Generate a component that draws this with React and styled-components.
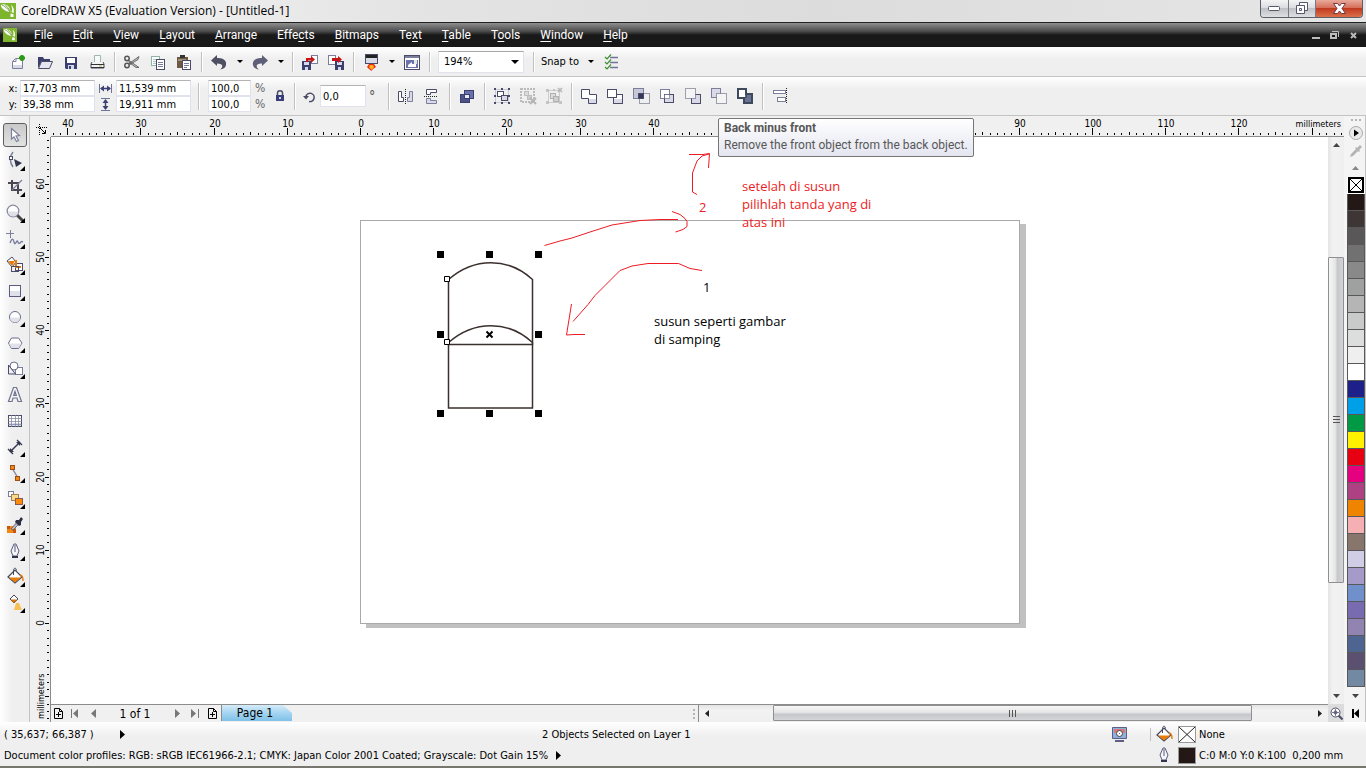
import React from 'react';
import styled, { createGlobalStyle, css } from 'styled-components';

const GlobalStyle = createGlobalStyle`
  * { box-sizing: border-box; }

  body {
    margin: 0;
    background: #f0f0f0;
    color: #000;
    font-family: 'DejaVu Sans Condensed', 'DejaVu Sans', sans-serif;
    font-size: 11px;
  }

  button, input, select {
    font: inherit;
    color: inherit;
    margin: 0;
    padding: 0;
    border: 0;
    background: none;
  }

  svg { display: block; flex: none; }
`;

/* COLOURS SHARED BY THE ICONS */
const INK = '#4a4b66';
const EDGE = '#7c7f9b';
const PALE = '#d9d9e8';
const NAVY = '#3b3f6e';

const uiFont = css`
  font-family: 'Open Sans', 'Noto Sans', sans-serif;
`;

const narrowFont = css`
  font-family: Roboto, 'Open Sans', sans-serif;
`;

/* WINDOW FRAME */
const Window = styled.div`
  display: flex;
  flex-direction: column;
  min-height: 100vh;
  border-bottom: 2px solid #77776f;
`;

const TitleBar = styled.header`
  ${uiFont}
  display: flex;
  align-items: center;
  height: 23px;
  background: linear-gradient(90deg, #f6f6f6, #e4e4e4 30%, #dcdcdc 60%, #e6e6e6);
  border-bottom: 1px solid #222;
`;

const Title = styled.h1`
  flex: 1;
  margin: 0 0 0 5px;
  font-size: 12px;
  line-height: 20px;
  font-weight: 400;
`;

const Controls = styled.div`
  display: flex;
  align-self: flex-start;
  margin-right: 3px;
  border: 1px solid #5d5f66;
  border-top: 0;
  border-radius: 0 0 4px 4px;
  overflow: hidden;
`;

const ControlButton = styled.button`
  display: grid;
  place-items: center;
  width: ${props => (props.$close ? 47 : 27)}px;
  height: 17px;
  background: ${props =>
    props.$close
      ? 'linear-gradient(#e9a99b 0, #d6705c 45%, #c03a20 50%, #dc7048 100%)'
      : 'linear-gradient(#f4f4f5 0, #dcdde0 45%, #c0c1c6 50%, #dedfe2 100%)'};

  & + & { border-left: 1px solid #777983; }
`;

/* MENU */
const MenuBar = styled.nav`
  ${narrowFont}
  display: flex;
  align-items: center;
  height: 24px;
  padding: 0 8px 0 3px;
  color: #fff;
  background: linear-gradient(#8f8f8f 0, #4a4a4a 35%, #191919 50%, #181818 100%);
`;

const MenuList = styled.div`
  display: flex;
  flex: 1;
  margin-left: 7px;
`;

const MenuItem = styled.button`
  padding: 0 10px;
  font-size: 12px;
  line-height: 22px;

  u { text-underline-offset: 2px; }
`;

const DocControls = styled.div`
  display: flex;
  gap: 10px;
`;

const DocButton = styled.button`
  width: 9px;
  height: 22px;
  display: grid;
  place-items: center;
`;

/* TOOLBARS */
const Bar = styled.div`
  display: flex;
  align-items: center;
  height: ${props => (props.$tall ? 39 : 30)}px;
  padding-left: 6px;
  border-bottom: 1px solid #c3c3c3;
  background: linear-gradient(#fff 0, #efefef 12px);
`;

const Divider = styled.span`
  width: 2px;
  height: ${props => (props.$tall ? 27 : 20)}px;
  margin: 0 3px 0 4px;
  border-left: 1px solid #c0c0c0;
  border-right: 1px solid #fff;
`;

const IconButton = styled.button`
  position: relative;
  display: grid;
  place-items: center;
  width: 26px;
  height: 26px;
`;

const CaretButton = styled.button`
  display: grid;
  place-items: center;
  width: 15px;
  height: 26px;
`;

const Zoom = styled.div`
  display: grid;
  align-items: center;
  width: 86px;
  height: 22px;
  margin: 0 5px 0 4px;
  background: #fff;
  border: 1px solid #e0e3ee;
  border-top-color: #a8a8a8;

  > * { grid-area: 1 / 1; }
  svg { justify-self: end; margin-right: 4px; pointer-events: none; }
`;

const ZoomSelect = styled.select`
  appearance: none;
  width: 100%;
  height: 20px;
  padding-left: 5px;
  outline: none;
`;

const SnapButton = styled.button`
  display: flex;
  align-items: center;
  gap: 9px;
  margin: 0 4px 0 3px;
  height: 26px;
`;

const FieldGrid = styled.div`
  display: grid;
  grid-template-columns: ${props => props.$cols};
  grid-auto-rows: ${props => (props.$single ? 22 : 16)}px;
  align-items: center;
  margin-right: ${props => props.$gap || 0}px;
`;

const FieldLabel = styled.label`
  display: grid;
  place-items: center;
`;

const Field = styled.input`
  width: ${props => props.$width}px;
  height: ${props => (props.$single ? 22 : 16)}px;
  padding: 0 0 0 2px;
  background: #fff;
  border: 1px solid #e0e3ee;
  border-top-color: ${props => (props.$plain ? '#e0e3ee' : '#b4b4b4')};
  outline: none;
`;

const ScaleField = styled(Field)`
  margin-left: 5px;
`;

const Unit = styled.span`
  padding-left: 5px;
  font-size: 12px;
  color: #666;
`;

const Degree = styled.span`
  width: 18px;
  padding-left: 3px;
  font-size: 14px;
  color: #555;
`;

const LockButton = styled(IconButton)`
  margin: 0 -3px 0 -1px;
`;

const TooltipBox = styled.span`
  ${narrowFont}
  position: absolute;
  z-index: 5;
  left: 12px;
  top: 35px;
  min-width: 256px;
  padding: 1px 4px 2px 5px;
  font-size: 12px;
  line-height: 17px;
  text-align: left;
  white-space: nowrap;
  color: #575757;
  background: linear-gradient(#fff, #e4e5f0);
  border: 1px solid #767676;
  border-radius: 2px;

  strong { display: block; }
`;

/* WORK AREA */
const Workspace = styled.main`
  flex: 1;
  display: grid;
  grid-template-columns: 30px 21px 1fr 16px 22px;
  grid-template-rows: 21px 1fr 18px;
`;

const Toolbox = styled.aside`
  grid-row: 1 / -1;
  display: flex;
  flex-direction: column;
  align-items: center;
  padding-top: 6px;
  border-right: 1px solid #c3c3c3;
  background: linear-gradient(90deg, #fff 0, #efefef 12px);
`;

const ToolButton = styled.button`
  display: grid;
  place-items: center;
  width: 24px;
  height: 24px;
  margin: 1px 0;
  border-radius: 3px;
  ${props =>
    props.$active &&
    css`
      border: 1px solid #5f5f5f;
      background: linear-gradient(#c9c9c9, #e2e2e2);
    `}
`;

const RulerCorner = styled.div`
  display: grid;
  place-items: end;
  padding: 0 4px 2px 0;
`;

const TopRuler = styled.div`
  grid-column: 3 / 5;
  border-bottom: 1px solid #8c8c8c;
  overflow: hidden;
`;

const SideRuler = styled.div`
  grid-column: 2;
  grid-row: 2 / 4;
  border-right: 1px solid #8c8c8c;
  overflow: hidden;
`;

const RulerSvg = styled.svg`
  font-size: 10px;
  shape-rendering: crispEdges;

  .unit { font-size: 9px; }
`;

const Canvas = styled.section`
  grid-column: 3;
  grid-row: 2;
  position: relative;
  overflow: hidden;
  background: #fff;
`;

const Page = styled.div`
  position: absolute;
  left: 309px;
  top: 83px;
  width: 660px;
  height: 404px;
  border: 1px solid #a9a9a9;
  box-shadow: 6px 4px 0 #c0c0c0;
`;

const Drawing = styled.svg`
  position: absolute;
  inset: 0;
  width: 100%;
  height: 100%;
`;

const Note = styled.p`
  ${uiFont}
  position: absolute;
  left: ${props => props.$x}px;
  top: ${props => props.$y}px;
  margin: 0;
  font-size: 13px;
  line-height: 18px;
  white-space: pre;
  color: ${props => (props.$red ? '#ed1c24' : '#000')};
`;

/* SCROLL BARS */
const VScroll = styled.div`
  grid-column: 4;
  grid-row: 2;
  display: flex;
  flex-direction: column;
  background: linear-gradient(90deg, #e4e4e4, #f2f2f2 30%, #efefef);
`;

const HScroll = styled.div`
  flex: 629;
  display: flex;
  padding-bottom: 1px;
  background: linear-gradient(#e4e4e4, #f2f2f2 30%, #efefef);
`;

const ScrollArrow = styled.button`
  flex: 0 0 16px;
  display: grid;
  place-items: center;
`;

const ScrollGap = styled.span`
  flex: ${props => props.$part};
`;

const ScrollThumb = styled.button`
  flex: ${props => props.$part};
  display: grid;
  place-items: center;
  border: 1px solid #8f8f8f;
  border-radius: 1px;
  background: linear-gradient(
    ${props => (props.$vertical ? '90deg' : '180deg')},
    #f6f6f6 0, #e6e6e8 45%, #c6c7ca 60%, #d4d5d8 100%
  );
`;

/* PAGE NAVIGATOR */
const BottomRow = styled.div`
  grid-column: 3;
  grid-row: 3;
  display: flex;
  border-top: 1px solid #8c8c8c;
`;

const Navigator = styled.div`
  flex: 642;
  display: flex;
  align-items: center;
  font-size: 12px;
`;

const NavButton = styled.button`
  display: grid;
  place-items: center;
  width: ${props => props.$width || 18}px;
  height: 17px;
`;

const PageCount = styled.span`
  width: 66px;
  text-align: center;
`;

const PageTab = styled.button`
  width: 71px;
  height: 16px;
  padding-right: 4px;
  align-self: flex-start;
  background: linear-gradient(#d5ecfa, #a5d4f0 50%, #7fc1e8);
  border-left: 1px solid #8c8c8c;
  clip-path: polygon(0 0, 62px 0, 100% 8px, 100% 100%, 0 100%);
`;

const Splitter = styled.span`
  flex: 0 0 6px;
  display: grid;
  align-items: center;
  border-right: 1px solid #8c8c8c;
`;

const ZoomCorner = styled.button`
  grid-column: 4;
  grid-row: 3;
  display: grid;
  place-items: center;
  background: #dcdcdc;
`;

/* COLOUR PALETTE */
const Palette = styled.aside`
  grid-column: 5;
  grid-row: 1 / -1;
  display: flex;
  flex-direction: column;
  align-items: center;
  padding-left: 2px;
  border-right: 1px solid #c3c3c3;
  background: #f4f4f4;
`;

const PaletteButton = styled.button`
  display: grid;
  place-items: center;
  width: 18px;
  height: ${props => props.$height}px;
`;

const NoColor = styled.button`
  width: 18px;
  height: 17px;
  display: grid;
  place-items: start center;
  background: #fff;
`;

const Swatches = styled.div`
  width: 18px;
  border: 1px solid #585858;
  border-top: 0;
  background: #585858;
`;

const Swatch = styled.button`
  display: block;
  width: 16px;
  height: 16px;
  margin-bottom: 1px;
  background: ${props => props.$color};

  &:last-child { margin-bottom: 0; }
`;

/* STATUS BAR */
const StatusBar = styled.footer`
  padding: 2px 0 1px 4px;
  background: linear-gradient(#fff 0, #efefef 14px);
`;

const StatusRow = styled.div`
  display: flex;
  align-items: center;
  height: ${props => (props.$last ? 20 : 21)}px;
`;

const Coords = styled.div`
  display: flex;
  align-items: center;
  gap: 26px;
  flex: 0 0 39.5%;
`;

const Profiles = styled.div`
  display: flex;
  align-items: center;
  gap: 8px;
`;

const StatusInfo = styled.div`
  display: flex;
  align-items: center;
  width: ${props => props.$width}px;
  margin-left: auto;
`;

const StatusSwatch = styled.span`
  display: block;
  width: 18px;
  height: 17px;
  margin: 0 3px 0 4px;
  border: 1px solid #999;
  background: ${props => props.$color};
`;

const StatusDivider = styled.span`
  width: 1px;
  height: 13px;
  margin: 0 3px 0 23px;
  background: #c0c0c0;
`;

/* ICONS */
const Icon = ({ size = 18, children }) => (
  <svg width={size} height={size} viewBox={`0 0 ${size} ${size}`} fill="none" aria-hidden="true">
    {children}
  </svg>
);

const Triangle = ({ dir = 'down', color = '#000', w = 7 }) => {
  const h = Math.ceil(w / 2);
  const shapes = {
    down: [w, h, `M0 0H${w}L${w / 2} ${h}Z`],
    up: [w, h, `M0 ${h}H${w}L${w / 2} 0Z`],
    left: [h, w, `M${h} 0V${w}L0 ${w / 2}Z`],
    right: [h, w, `M0 0V${w}L${h} ${w / 2}Z`],
  };
  const [width, height, d] = shapes[dir];
  return (
    <svg width={width} height={height} aria-hidden="true">
      <path d={d} fill={color} />
    </svg>
  );
};

const Balloon = ({ size }) => (
  <svg width={size} height={size} viewBox="0 0 16 16" aria-hidden="true">
    <path fill="#7db52c" d="M0 0h16v16H0z" />
    <path fill="#fff" d="M1 2c2-1.500 5-1 7 1s2 4 3 6c-3 0-6-1-8-3C1.500 4.500.5 3 1 2zM11 2c2.500 1.500 3.500 5 2.500 8l-2-1c1-2 .5-5-.5-7zM10.500 10.500l3 .5v3h-3z" />
    <path fill="none" stroke="#5c8d1c" strokeWidth=".8" d="M2 2c3 1 6 4 8 7M5 1.500c2 2 4 4.500 5.500 7" />
  </svg>
);

const box = (x, y, w, h, fill = '#fff', stroke = INK) => (
  <rect x={x + 0.5} y={y + 0.5} width={w - 1} height={h - 1} fill={fill} stroke={stroke} />
);

const dots = (x, y, w, h, fill = 'none', stroke = INK) => (
  <rect x={x + 0.5} y={y + 0.5} width={w - 1} height={h - 1} fill={fill} stroke={stroke} strokeDasharray="1 1" />
);

const icons = {
  newDoc: (
    <>
      <path d="M5.500 5.500H12.500V15.500H2.500V8.500z" fill="#fff" stroke={EDGE} />
      <path d="M3 8.500h3v-3" stroke={EDGE} />
      <path d="M3 12h9v3H3z" fill={PALE} />
      <path d="M12 2v6M9 5h6M10 3l4 4M14 3l-4 4" stroke="#2c9a14" strokeWidth="2" />
    </>
  ),
  open: (
    <>
      <path d="M2 15V4h5l1 2h6v2H6z" fill={NAVY} />
      <path d="M5.500 8.500h11l-3 7h-11z" fill="#e6e6f0" stroke={INK} />
    </>
  ),
  save: (
    <>
      <path d="M3 4h12v12H4l-1-1z" fill={NAVY} />
      <path d="M5 5h8v5H5z" fill="#fff" />
      <path d="M6 12h6v4H6z" fill="#d5d7ee" />
      <path d="M7 13h2v3H7z" fill={NAVY} />
    </>
  ),
  print: (
    <>
      <path d="M6.500 2.500h6v8h-6z" fill="#f4fbf8" stroke="#9fb5ad" />
      <path d="M4 9l-1 2v4h13v-4l-1-2" fill="#f4f4f4" stroke={INK} />
      <path d="M3 11.500h13M3 14.500h13" stroke="#333" />
      <path d="M11 13h3" stroke="#b9b34e" />
    </>
  ),
  cut: (
    <>
      <path d="M6 10.500L16 3.500l-1 3-8 5zM6 7.500l10 7-3 0-7-5z" fill="#bbb" stroke="#555" strokeWidth=".8" />
      <circle cx="4" cy="5.500" r="2.200" stroke="#555" strokeWidth="1.500" />
      <circle cx="4" cy="12.500" r="2.200" stroke="#555" strokeWidth="1.500" />
    </>
  ),
  copy: (
    <>
      {box(2, 3, 9, 10, '#fff', '#8fb5a9')}
      <path d="M4 6.500h3M4 8.500h3M4 10.500h3" stroke="#a7c6bc" />
      {box(7, 6, 9, 11, '#fff', INK)}
      <path d="M9 9.500h5M9 11.500h5M9 13.500h5" stroke="#777a9c" />
    </>
  ),
  paste: (
    <>
      <path d="M2 4h11v11H2z" fill="#6e5a44" />
      <path d="M5 2h5v3H5z" fill="#333" />
      <path d="M3 6h8v2H3z" fill="#a3917c" />
      {box(7, 7, 9, 10, '#fff', INK)}
      <path d="M9 10.500h5M9 12.500h5M9 14.500h3" stroke="#777a9c" />
    </>
  ),
  undo: <path d="M1 7.500L7 2v3c6-.5 10 2.500 9 7-.5 3-3 4-6 4.500 3-2 4-6-3-6V13z" fill="#4e4f60" />,
  redo: <path d="M17 7.500L11 2v3C5 4.500 1 7.500 2 12c.5 3 3 4 6 4.500-3-2-4-6 3-6V13z" fill="#5d5f78" />,
  importDoc: (
    <>
      {box(10, 2, 7, 9, '#fff', EDGE)}
      <path d="M1 8h9v9H1z" fill={NAVY} />
      <path d="M3 9h5v3H3zM4 14h3v3H4z" fill="#d5d7ee" />
      <path d="M5 9V5h5V3l4 3.500-4 3.500V7.500H7V9" fill="#c81414" />
    </>
  ),
  exportDoc: (
    <>
      {box(1, 2, 8, 10, '#fff', EDGE)}
      <path d="M8 8h9v9H8z" fill={NAVY} />
      <path d="M10 9h5v3h-5zM11 14h3v3h-3z" fill="#d5d7ee" />
      <path d="M5 5h6V3l4 3.500-4 3.500V8H5z" fill="#c81414" />
    </>
  ),
  launcher: (
    <>
      {box(3, 1, 13, 10, PALE, INK)}
      <path d="M4 2h11v3H4z" fill="#222" />
      <path d="M7 11h5l2 3-3 2-1.500 2L7 16l-2-2z" fill="#ee2c0c" />
      <path d="M8 12h3l1 2-2.500 3L7 14z" fill="#ffb020" />
    </>
  ),
  welcome: (
    <>
      {box(1, 2, 16, 15, '#fff', INK)}
      <path d="M2 3h14v2H2z" fill={EDGE} />
      <path d="M3 7h12v8H3z" fill="#6d74ad" />
      <path d="M5 12l4-3v2h4v3H5z" fill="#fff" />
      <path d="M11 7h3v4h-3z" fill="#dfeedd" />
    </>
  ),
  options: (
    <>
      <path d="M8 4.500h8M8 9.500h8M8 14.500h8" stroke="#70739a" strokeWidth="1.500" />
      <path d="M3 4l2 2 4-4.500M3 9l2 2 4-4.500M3 14l2 2 4-4.500" stroke="#3d8f2c" strokeWidth="1.200" />
    </>
  ),
  mirrorH: (
    <>
      <path d="M1.500 4.500h3v6h2v4h-5z" fill="#fff" stroke={INK} />
      <path d="M15.500 4.500h-3v6h-2v4h5z" fill={PALE} stroke={EDGE} />
      <path d="M8.500 2v15" stroke="#222" strokeDasharray="1 1" />
    </>
  ),
  mirrorV: (
    <>
      <path d="M3.500 2.500h10v3h-6v2h-4z" fill="#fff" stroke={INK} />
      <path d="M3.500 16.500h10v-3h-6v-2h-4z" fill={PALE} stroke={EDGE} />
      <path d="M1 9.500h14" stroke="#222" strokeDasharray="1 1" />
    </>
  ),
  order: (
    <>
      {box(6, 3, 10, 9, '#6970ad', NAVY)}
      {box(2, 7, 10, 9, '#4c5288', NAVY)}
      {box(6, 7, 6, 5, '#e4ecf4', NAVY)}
    </>
  ),
  group: (
    <>
      {box(2, 2, 14, 14, 'none', '#c9c9d8')}
      <path d="M1 1h2v2H1zM8 1h2v2H8zM15 1h2v2h-2zM1 8h2v2H1zM15 8h2v2h-2zM1 15h2v2H1zM8 15h2v2H8zM15 15h2v2h-2z" fill={INK} />
      {box(4, 4, 7, 6)}
      {box(8, 8, 7, 6, PALE)}
    </>
  ),
  ungroup: (
    <>
      <rect x="2" y="2" width="13" height="13" stroke="#bbb" strokeWidth="2" strokeDasharray="2 1" />
      {box(5, 4, 5, 5, '#ddd', '#bdbdbd')}
      {box(8, 8, 5, 5, '#ccc', '#bdbdbd')}
      <path d="M11 11l6 6M17 11l-6 6" stroke="#b5b5b5" strokeWidth="2" />
    </>
  ),
  ungroupAll: (
    <>
      {box(3, 3, 12, 13, 'none', '#ccc')}
      <path d="M1 2h3v3H1zM1 14h3v3H1zM14 14h3v3h-3zM8 2h2v2H8z" fill="#c4c4c4" />
      {box(5, 6, 6, 6, '#ddd', '#b0b0b0')}
      {box(8, 9, 6, 6, '#d0d0d0', '#b0b0b0')}
      <path d="M13 1l4 4M17 1l-4 4" stroke="#b5b5b5" strokeWidth="1.500" />
    </>
  ),
  weld: (
    <>
      <path d="M1.500 2.500h8v5h7v9h-8v-5h-7z" fill="#fff" stroke={INK} />
      <path d="M9 12h7v4H9z" fill={PALE} />
    </>
  ),
  trim: (
    <>
      {box(7, 7, 10, 10, '#fff')}
      <path d="M8 12h8v4H8z" fill={PALE} />
      {box(1, 2, 10, 9)}
    </>
  ),
  intersect: (
    <>
      {box(1, 1, 11, 11, '#c6c8d8', EDGE)}
      {dots(7, 6, 11, 11)}
      {box(6, 6, 6, 6, '#34365a', INK)}
    </>
  ),
  simplify: (
    <>
      {box(2, 2, 10, 10, '#fff', EDGE)}
      {box(6, 7, 10, 9, PALE)}
      {dots(6, 7, 6, 5, '#fff')}
    </>
  ),
  frontMinusBack: (
    <>
      {box(7, 7, 10, 10, PALE)}
      {dots(1, 1, 11, 11, '#f4f4f4')}
    </>
  ),
  backMinusFront: (
    <>
      {box(1, 1, 10, 10, PALE, EDGE)}
      {dots(6, 6, 11, 11, '#f4f4f4')}
    </>
  ),
  boundary: (
    <>
      <path d="M2 2h8v5h6v9H8v-5H2z" fill="#fff" stroke="#3d4a5c" strokeWidth="2" />
      <path d="M9 8h6v7H9z" fill="#6d7396" />
      <path d="M7 10.500h3.500V7" stroke="#3d4a5c" />
    </>
  ),
  align: (
    <>
      {box(2, 3, 13, 4, '#fff', EDGE)}
      {box(6, 10, 9, 5, '#fff', EDGE)}
      <path d="M15.500 1v16" stroke="#222" strokeDasharray="1 1" />
    </>
  ),
  lock: (
    <>
      <path d="M6.500 9V6c0-3 5-3 5 0v3" stroke={INK} strokeWidth="1.500" />
      <path d="M5 8h8v6H5z" fill="#3a3d78" />
      <path d="M8 10h2v2H8z" fill="#cfd2ee" />
    </>
  ),
};

const toolIcons = {
  pick: <path d="M6.500 3.500l8 7-3.500.5 2.500 4.500-2 1-2.500-4.500-2.500 2z" fill="#fff" stroke={EDGE} strokeWidth="1.200" />,
  shape: (
    <>
      <path d="M8 1C4.500 5 4.500 11 8 16" stroke={EDGE} strokeWidth="1.500" />
      {box(4, 5, 4, 4, '#fff', INK)}
      <path d="M9 8l8 4-6 4z" fill="#33354c" />
    </>
  ),
  crop: (
    <>
      <path d="M7 3v11M3 6h11M13 6v11M6 13h11" stroke="#4b4650" strokeWidth="2" />
      <path d="M7 13L17 3" stroke={EDGE} strokeWidth="1.300" />
    </>
  ),
  zoom: (
    <>
      <path d="M12 12l6 6" stroke="#444" strokeWidth="3" />
      <circle cx="8" cy="8" r="5.800" fill="#fff" stroke="#8a8ca0" strokeWidth="1.300" />
      <path d="M3 8.500h10a5 5 0 0 1-10 0z" fill="#dfdfea" />
    </>
  ),
  freehand: (
    <>
      <path d="M5.500 1v8M1 4.500h8" stroke={EDGE} />
      <path d="M5 14c2-5 3-5 4-1s2 0 3-1 1 4 3 2 1-2 3-1" stroke="#777a9c" strokeWidth="1.300" />
    </>
  ),
  smartFill: (
    <>
      <path d="M2 6l5-4 4 5-4 5z" fill="#fff" stroke={INK} />
      <path d="M3 6h7l-3 5z" fill="#e77b0c" />
      {box(10, 8, 8, 8, '#fff', INK)}
      <path d="M11 5v7h5" stroke="#e77b0c" strokeWidth="2" />
      {box(6, 11, 8, 6, 'none', INK)}
    </>
  ),
  rect: (
    <>
      {box(4, 4, 12, 12, '#fff', '#5b5d80')}
      <path d="M5 10h10v5H5z" fill="#e1e1ec" />
    </>
  ),
  ellipse: (
    <>
      <circle cx="10" cy="10" r="5.500" fill="#fff" stroke="#6a6c8a" />
      <path d="M5 10.500h10a5 5 0 0 1-10 0z" fill="#e1e1ec" />
    </>
  ),
  polygon: (
    <>
      <path d="M6.500 5h7l3.500 5-3.500 5.500h-7L3.500 10z" fill="#fff" stroke="#6a6c8a" />
      <path d="M4 10.500h12.500l-3 4.500h-7z" fill="#e1e1ec" />
    </>
  ),
  basicShapes: (
    <>
      {box(10, 8, 8, 8, '#fff', EDGE)}
      <circle cx="9" cy="7" r="4" fill="#fff" stroke="#6a6c8a" />
      <path d="M3.500 6v9h7z" fill="#eee" stroke={INK} />
    </>
  ),
  text: (
    <path
      d="M8.500 2.500h3l5 14h-3.500l-1-3.500H8l-1 3.500H3.500zM10 6.500L8.700 10.500h2.600z"
      fill="#f4f4fa"
      stroke="#70738e"
      strokeWidth="1.200"
      fillRule="evenodd"
    />
  ),
  table: (
    <>
      {box(3, 4, 14, 12, '#fff', INK)}
      <path d="M4 12h12v3H4z" fill={PALE} />
      <path d="M6.500 4v12M10.500 4v12M13.500 4v12M3 7.500h14M3 10.500h14M3 13.500h14" stroke={EDGE} strokeWidth=".7" />
    </>
  ),
  dimension: (
    <>
      <path d="M5 15L15 5" stroke="#33354c" strokeWidth="1.500" />
      <path d="M3 12l5 5M12 3l5 5" stroke="#33354c" strokeWidth="1.300" />
      <path d="M5 15v-4l4 4zM15 5v4l-4-4z" fill="#33354c" />
    </>
  ),
  connector: (
    <>
      <path d="M7 5l6 10" stroke={EDGE} strokeWidth="1.300" />
      {box(5, 2, 5, 5, '#f08a12', '#a04c18')}
      {box(10, 13, 5, 5, '#f08a12', '#a04c18')}
    </>
  ),
  blend: (
    <>
      {box(3, 2, 6, 6, '#fff', EDGE)}
      {box(6, 5, 8, 7, '#fbd987', '#a08058')}
      {box(10, 9, 8, 7, '#ff8a0a', '#8a5a4a')}
    </>
  ),
  dropper: (
    <>
      <path d="M2 11h9v7H2z" fill="#ef8a14" />
      <path d="M2 11h3v3H2zM8 14h3v4H8z" fill="#c8560c" />
      <path d="M6 14l6-7 2 2-6 6z" fill="#b7b9c9" stroke={INK} strokeWidth=".7" />
      <path d="M11 5l3 0 2-3 2 2-2 3v3l-2 1-4-4z" fill="#2e3044" />
    </>
  ),
  outline: (
    <>
      <path d="M9 3h2l3 7-2 5H8l-2-5z" fill="#f4f4fa" stroke="#5b5d78" />
      <path d="M10 4v7" stroke="#5b5d78" />
      <path d="M7 15h6v2H7z" fill="#33354c" />
    </>
  ),
  fill: (
    <>
      <path d="M3 10l7-7 7 7-7 6z" fill="#fff" stroke="#44465c" strokeWidth="1.200" />
      <path d="M4 10.500h12l-6 5z" fill="#ea7d09" />
      <path d="M8.500 8V3.500c0-3 3-3 3 0" stroke="#44465c" />
      <path d="M15 8c3 0 3 3 3 6" stroke="#ea7d09" strokeWidth="1.500" />
    </>
  ),
  interactiveFill: (
    <>
      <path d="M5 6l4-4 4 4-4 4z" fill="#fff" stroke="#44465c" />
      <path d="M5.500 6.500h7L9 10z" fill="#d9730c" />
      <path d="M9 17l2-7h3l3 7z" fill="#f7c057" />
    </>
  ),
};

const SpanIcon = ({ vertical }) => (
  <svg width="13" height="13" viewBox="0 0 13 13" aria-hidden="true">
    <g transform={vertical ? 'rotate(90 6.500 6.500)' : undefined} fill="none" stroke="#3d4172">
      <path d="M.5 2v9M12.500 2v9" stroke="#70739a" />
      <path d="M2 6.500h9" strokeWidth="1.500" />
      <path d="M1 6.500l4-3v6zM12 6.500l-4-3v6z" fill="#3d4172" stroke="none" />
    </g>
  </svg>
);

const PageAdd = () => (
  <svg width="9" height="11" viewBox="0 0 9 11" fill="none" stroke="#000" aria-hidden="true">
    <path d="M.5.5h5l3 3v7h-8zM5.500.5v3h3M2 6.500h5M4.500 4v5" />
  </svg>
);

/* DATA */
const MENU = [
  ['', 'F', 'ile'], ['', 'E', 'dit'], ['', 'V', 'iew'], ['', 'L', 'ayout'],
  ['', 'A', 'rrange'], ['Effe', 'c', 'ts'], ['', 'B', 'itmaps'], ['Te', 'x', 't'],
  ['', 'T', 'able'], ['T', 'o', 'ols'], ['', 'W', 'indow'], ['', 'H', 'elp'],
];

const TOOLS = [
  ['pick', 'Pick tool'], ['shape', 'Shape tool', 1], ['crop', 'Crop tool', 1], ['zoom', 'Zoom tool', 1],
  ['freehand', 'Freehand tool', 1], ['smartFill', 'Smart fill tool', 1], ['rect', 'Rectangle tool', 1],
  ['ellipse', 'Ellipse tool', 1], ['polygon', 'Polygon tool', 1], ['basicShapes', 'Basic shapes', 1],
  ['text', 'Text tool'], ['table', 'Table tool'], ['dimension', 'Dimension tool', 1],
  ['connector', 'Connector tool', 1], ['blend', 'Blend tool', 1], ['dropper', 'Color eyedropper', 1],
  ['outline', 'Outline tool', 1], ['fill', 'Fill tool', 1], ['interactiveFill', 'Interactive fill', 1],
];

const COLORS = [
  '#231815', '#3e3635', '#595757', '#727171', '#898989', '#9fa0a0', '#b5b5b6', '#c9caca',
  '#dcdddd', '#efefef', '#ffffff', '#1d2088', '#00a0e9', '#009944', '#fff100', '#e60012',
  '#e4007f', '#ae4084', '#ef8400', '#f5b0b3', '#88756b', '#d0cee6', '#a59aca', '#7090cb',
  '#796bb0', '#9184b0', '#4e6592', '#5b506f', '#7388a2',
];

/* 1 mm on the rulers, and where their zero marks fall */
const MM = 7.32;
const ZERO_X = 309;
const ZERO_Y = 486;

/* Numbers on the top ruler; the open tooltip covers 50 to 80 */
const TOP_LABELS = [-40, -30, -20, -10, 0, 10, 20, 30, 40, 90, 100, 110, 120];

const range = (from, to) => Array.from({ length: to - from + 1 }, (_, i) => from + i);

const tickSize = mm => (mm % 10 === 0 ? 7 : mm % 5 === 0 ? 3 : 2);

const HorizontalRuler = () => (
  <RulerSvg width="100%" height="20" aria-hidden="true">
    {range(-42, 134).map(mm => {
      const x = Math.round(ZERO_X + mm * MM);
      return (
        <g key={mm}>
          <rect x={x} y={19 - tickSize(mm)} width="1" height={tickSize(mm)} />
          {TOP_LABELS.includes(mm) && <text x={x + 1} y="11" textAnchor="middle">{Math.abs(mm)}</text>}
        </g>
      );
    })}
    <text className="unit" x="100%" dx="-3" y="11" textAnchor="end">millimeters</text>
  </RulerSvg>
);

const VerticalRuler = () => (
  <RulerSvg width="20" height="584" aria-hidden="true">
    {range(-13, 66).map(mm => {
      const y = Math.round(ZERO_Y - mm * MM);
      const size = mm % 10 === 0 ? 4 : 2;
      return (
        <g key={mm}>
          <rect x={19 - size} y={y} width={size} height="1" />
          {mm % 10 === 0 && mm >= 0 && (
            <text transform={`translate(14 ${y}) rotate(-90)`} textAnchor="middle">{mm}</text>
          )}
        </g>
      );
    })}
    <text className="unit" transform="translate(14 582) rotate(-90)">millimeters</text>
  </RulerSvg>
);

const Artwork = () => (
  <Drawing aria-hidden="true">
    <g transform="translate(-51 -137)" fill="none">
      <g stroke="#3a302d" strokeWidth="1.500">
        <path d="M448.500 279.500C474 257 508 257 532.500 279.500V344.500H448.500Z" />
        <path d="M448.500 342.500C474 320 508 320 532.500 342.500V408H448.500Z" />
      </g>
      <g fill="#000">
        {[254, 334, 413].map(y =>
          [440, 489, 538].map(x =>
            x === 489 && y === 334 ? null : <rect key={`${x}-${y}`} x={x - 3} y={y - 3} width="7" height="7" />
          )
        )}
      </g>
      <path d="M486.500 331.500l6 6M492.500 331.500l-6 6" stroke="#000" strokeWidth="2" />
      <path d="M444.500 276.500h5v5h-5zM444.500 339.500h5v5h-5z" fill="#fff" stroke="#000" />
      <g stroke="#ed1c24">
        <path d="M544.500 245.500L560 241l12-3 18-6 22-7 28-4.500 20-1h18M672 211.500l8 3 5 4 2 3v5l-4 3-7.500 2.500" />
        <path d="M702 270.500l-12-2-11.500-5H648l-16 2.500-12 4.500-15 15-10 10-7 9-15 17M571.500 304l-5 31 7.500-.5h11" />
        <path d="M697 194.500l-4.500-2.500v-19l4.500-12 5-5 7-2M689 154.500h14l6.500-1-1 14.500" />
      </g>
    </g>
  </Drawing>
);

const ToolbarIcons = ({ items }) =>
  items.map(([name, label]) => (
    <IconButton key={name} aria-label={label}>
      <Icon>{icons[name]}</Icon>
    </IconButton>
  ));

const Caret = ({ label }) => (
  <CaretButton aria-label={label}><Triangle w={6} /></CaretButton>
);

const StandardToolbar = () => (
  <Bar>
    <ToolbarIcons items={[['newDoc', 'New'], ['open', 'Open'], ['save', 'Save'], ['print', 'Print']]} />
    <Divider />
    <ToolbarIcons items={[['cut', 'Cut'], ['copy', 'Copy'], ['paste', 'Paste']]} />
    <Divider />
    <ToolbarIcons items={[['undo', 'Undo']]} />
    <Caret label="Undo list" />
    <ToolbarIcons items={[['redo', 'Redo']]} />
    <Caret label="Redo list" />
    <Divider />
    <ToolbarIcons items={[['importDoc', 'Import'], ['exportDoc', 'Export']]} />
    <Divider />
    <ToolbarIcons items={[['launcher', 'Application launcher']]} />
    <Caret label="Launcher list" />
    <ToolbarIcons items={[['welcome', 'Welcome screen']]} />
    <Divider />
    <Zoom>
      <ZoomSelect aria-label="Zoom level" defaultValue="194%">
        <option>100%</option>
        <option>194%</option>
        <option>200%</option>
      </ZoomSelect>
      <Triangle w={8} />
    </Zoom>
    <Divider />
    <SnapButton>Snap to <Triangle w={6} /></SnapButton>
    <ToolbarIcons items={[['options', 'Options']]} />
  </Bar>
);

const PropertyBar = () => (
  <Bar $tall>
    <FieldGrid $cols="14px 75px">
      <FieldLabel htmlFor="pos-x">x:</FieldLabel>
      <Field id="pos-x" $width={75} defaultValue="17,703 mm" />
      <FieldLabel htmlFor="pos-y">y:</FieldLabel>
      <Field id="pos-y" $width={75} $plain defaultValue="39,38 mm" />
    </FieldGrid>
    <FieldGrid $cols="21px 75px" $gap={3}>
      <FieldLabel htmlFor="size-w"><SpanIcon /></FieldLabel>
      <Field id="size-w" aria-label="Width" $width={75} defaultValue="11,539 mm" />
      <FieldLabel htmlFor="size-h"><SpanIcon vertical /></FieldLabel>
      <Field id="size-h" aria-label="Height" $width={75} $plain defaultValue="19,911 mm" />
    </FieldGrid>
    <Divider $tall />
    <FieldGrid $cols="47px 18px">
      <ScaleField aria-label="Horizontal scale" $width={43} defaultValue="100,0" />
      <Unit>%</Unit>
      <ScaleField aria-label="Vertical scale" $width={43} $plain defaultValue="100,0" />
      <Unit>%</Unit>
    </FieldGrid>
    <LockButton aria-label="Lock ratio"><Icon>{icons.lock}</Icon></LockButton>
    <Divider $tall />
    <FieldGrid $cols="21px 46px" $single>
      <FieldLabel htmlFor="angle">
        <svg width="13" height="13" viewBox="0 0 13 13" fill="none" aria-hidden="true">
          <path d="M3 7.500V6a4.200 4.200 0 1 1 3 5.500" stroke={INK} strokeWidth="1.500" />
          <path d="M0 6h6L3 9.500z" fill={INK} />
        </svg>
      </FieldLabel>
      <Field id="angle" aria-label="Rotation" $width={46} $single defaultValue="0,0" />
    </FieldGrid>
    <Degree>°</Degree>
    <Divider $tall />
    <ToolbarIcons items={[['mirrorH', 'Mirror horizontally'], ['mirrorV', 'Mirror vertically']]} />
    <Divider $tall />
    <ToolbarIcons items={[['order', 'To front']]} />
    <Divider $tall />
    <ToolbarIcons items={[['group', 'Group'], ['ungroup', 'Ungroup'], ['ungroupAll', 'Ungroup all']]} />
    <Divider $tall />
    <ToolbarIcons
      items={[
        ['weld', 'Weld'], ['trim', 'Trim'], ['intersect', 'Intersect'],
        ['simplify', 'Simplify'], ['frontMinusBack', 'Front minus back'],
      ]}
    />
    <IconButton aria-label="Back minus front" aria-describedby="shaping-tip">
      <Icon>{icons.backMinusFront}</Icon>
      <TooltipBox id="shaping-tip" role="tooltip">
        <strong>Back minus front</strong>
        Remove the front object from the back object.
      </TooltipBox>
    </IconButton>
    <ToolbarIcons items={[['boundary', 'Boundary']]} />
    <Divider $tall />
    <ToolbarIcons items={[['align', 'Align and distribute']]} />
  </Bar>
);

const App = () => (
  <>
    <GlobalStyle />
    <Window>
      <TitleBar>
        <Balloon size={16} />
        <Title>CorelDRAW X5 (Evaluation Version) - [Untitled-1]</Title>
        <Controls>
          <ControlButton aria-label="Minimize">
            <svg width="13" height="6"><rect x=".5" y=".5" width="11" height="4" rx="1" fill="#fff" stroke="#55576b" /></svg>
          </ControlButton>
          <ControlButton aria-label="Restore">
            <svg width="13" height="13" fill="#fff" stroke="#55576b">
              <path d="M3.500.5h8v8h-8z" />
              <path d="M.5 3.500h8v8h-8zM3.500 6.500h2v2h-2z" />
            </svg>
          </ControlButton>
          <ControlButton $close aria-label="Close">
            <svg width="13" height="11">
              <path d="M.5.5h4l2 2.500 2-2.500h4L9 5.500l3.500 5h-4l-2-2.500-2 2.500h-4L4 5.500z" fill="#fff" stroke="#6b3a44" />
            </svg>
          </ControlButton>
        </Controls>
      </TitleBar>

      <MenuBar>
        <Balloon size={14} />
        <MenuList>
          {MENU.map(([before, key, after]) => (
            <MenuItem key={before + key + after}>{before}<u>{key}</u>{after}</MenuItem>
          ))}
        </MenuList>
        <DocControls>
          <DocButton aria-label="Minimize document"><svg width="9" height="9"><path d="M1 6h8v2H1z" fill="#bbb" /></svg></DocButton>
          <DocButton aria-label="Restore document">
            <svg width="9" height="9" fill="none" stroke="#bbb"><path d="M2 .5h6.500V6" /><path d="M1 3h5v4H1z" strokeWidth="2" /></svg>
          </DocButton>
          <DocButton aria-label="Close document"><svg width="9" height="9"><path d="M2 2l5 5M7 2L2 7" stroke="#bbb" strokeWidth="2" /></svg></DocButton>
        </DocControls>
      </MenuBar>

      <StandardToolbar />
      <PropertyBar />

      <Workspace>
        <Toolbox>
          {TOOLS.map(([name, label, flyout]) => (
            <ToolButton key={name} aria-label={label} $active={name === 'pick'}>
              <Icon size={20}>
                {toolIcons[name]}
                {flyout && <path d="M20 15v5h-5z" fill="#000" />}
              </Icon>
            </ToolButton>
          ))}
        </Toolbox>

        <RulerCorner>
          <svg width="11" height="11" fill="none" stroke="#000" aria-hidden="true">
            <path d="M3.500 0v11M0 3.500h11" strokeDasharray="1 1" />
            <path d="M4 4l5 5M9.500 6v3.500H6" />
          </svg>
        </RulerCorner>
        <TopRuler><HorizontalRuler /></TopRuler>
        <SideRuler><VerticalRuler /></SideRuler>

        <Canvas>
          <Page />
          <Artwork />
          <Note $x={691} $y={40} $red>{'setelah di susun\npilihlah tanda yang di\natas ini'}</Note>
          <Note $x={648} $y={61} $red>2</Note>
          <Note $x={652} $y={141}>1</Note>
          <Note $x={603} $y={175}>{'susun seperti gambar\ndi samping'}</Note>
        </Canvas>

        <VScroll>
          <ScrollArrow aria-label="Scroll up"><Triangle dir="up" color="#444" /></ScrollArrow>
          <ScrollGap $part={104} />
          <ScrollThumb $part={326} $vertical aria-label="Vertical scroll">
            <svg width="7" height="8"><path d="M0 .5h7M0 3.500h7M0 6.500h7" stroke="#555" /></svg>
          </ScrollThumb>
          <ScrollGap $part={105} />
          <ScrollArrow aria-label="Scroll down"><Triangle color="#444" /></ScrollArrow>
        </VScroll>

        <BottomRow>
          <Navigator>
            <NavButton $width={15} aria-label="Add page before"><PageAdd /></NavButton>
            <NavButton aria-label="First page">
              <svg width="8" height="9" fill="#777"><path d="M0 0h1v9H0zM7 0v9L2 4.500z" /></svg>
            </NavButton>
            <NavButton aria-label="Previous page"><Triangle dir="left" color="#777" w={9} /></NavButton>
            <PageCount>1 of 1</PageCount>
            <NavButton aria-label="Next page"><Triangle dir="right" color="#777" w={9} /></NavButton>
            <NavButton $width={17} aria-label="Last page">
              <svg width="8" height="9" fill="#777"><path d="M7 0h1v9H7zM0 0v9l5-4.500z" /></svg>
            </NavButton>
            <NavButton $width={18} aria-label="Add page after"><PageAdd /></NavButton>
            <PageTab>Page 1</PageTab>
          </Navigator>
          <Splitter>
            <svg width="2" height="10"><path d="M0 0h2v2H0zM0 4h2v2H0zM0 8h2v2H0z" fill="#b5b5b5" /></svg>
          </Splitter>
          <HScroll>
            <ScrollArrow aria-label="Scroll left"><Triangle dir="left" color="#222" /></ScrollArrow>
            <ScrollGap $part={58} />
            <ScrollThumb $part={479} aria-label="Horizontal scroll">
              <svg width="8" height="7"><path d="M.5 0v7M3.500 0v7M6.500 0v7" stroke="#555" /></svg>
            </ScrollThumb>
            <ScrollGap $part={60} />
            <ScrollArrow aria-label="Scroll right"><Triangle dir="right" color="#222" /></ScrollArrow>
          </HScroll>
        </BottomRow>

        <ZoomCorner aria-label="Navigator">
          <svg width="13" height="13" viewBox="0 0 13 13" fill="none" stroke={INK}>
            <path d="M8.500 8.500l4 4" strokeWidth="2" />
            <circle cx="5.500" cy="5.500" r="4.500" fill="#fff" />
            <circle cx="5.500" cy="5.500" r="1.500" />
            <path d="M5.500 2v7M2 5.500h7" strokeWidth=".7" />
          </svg>
        </ZoomCorner>

        <Palette>
          <PaletteButton $height={8} aria-label="Move palette">
            <svg width="10" height="2"><path d="M0 0h2v2H0zM4 0h2v2H4zM8 0h2v2H8z" fill="#b5b5b5" /></svg>
          </PaletteButton>
          <PaletteButton $height={18} aria-label="Palette menu">
            <svg width="14" height="14">
              <circle cx="7" cy="7" r="6.500" fill="#e9e9e9" stroke="#aaa" />
              <path d="M5 3.500v7L10 7z" />
            </svg>
          </PaletteButton>
          <PaletteButton $height={17} aria-label="Pick color">
            <svg width="12" height="12" fill="#b3b3b3"><path d="M0 12l1-3 5-5 2 2-5 5zM5 3l4 4 1-1-1-1 3-3-2-2-3 3-1-1z" /></svg>
          </PaletteButton>
          <PaletteButton $height={18} aria-label="Palette up"><Triangle dir="up" color="#888" /></PaletteButton>
          <NoColor aria-label="No color">
            <svg width="16" height="16" stroke="#000" fill="none"><path d="M1 1h14v14H1z" strokeWidth="2" /><path d="M2 2l12 12M14 2L2 14" /></svg>
          </NoColor>
          <Swatches>
            {COLORS.map(color => <Swatch key={color} $color={color} aria-label={color} />)}
          </Swatches>
          <PaletteButton $height={17} aria-label="Palette down"><Triangle color="#444" /></PaletteButton>
          <PaletteButton $height={18} aria-label="Expand palette">
            <svg width="8" height="9"><path d="M0 0h2v9H0zM7 0v9L2 4.500z" /></svg>
          </PaletteButton>
        </Palette>
      </Workspace>

      <StatusBar>
        <StatusRow>
          <Coords>( 35,637; 66,387 ) <Triangle dir="right" w={9} /></Coords>
          <span>2 Objects Selected on Layer 1</span>
          <StatusInfo $width={254}>
            <svg width="15" height="15" aria-hidden="true">
              <path d="M.5.5h14v11H.5z" fill="#8fb0dc" stroke="#5b5f86" />
              <path d="M2 2h11v4H2z" fill="#d77a7a" />
              <circle cx="7.500" cy="6.500" r="3" fill="#fff" stroke="#444" />
              <path d="M7 6h1v1H7zM3 13h9v2H3z" fill="#5b5f86" />
            </svg>
            <StatusDivider />
            <Icon size={20}>{toolIcons.fill}</Icon>
            <StatusSwatch $color="#fff">
              <svg width="16" height="15" stroke="#222" aria-hidden="true">
                <path d="M0 0l16 15M16 0L0 15" />
              </svg>
            </StatusSwatch>
            <span>None</span>
          </StatusInfo>
        </StatusRow>
        <StatusRow $last>
          <Profiles>
            Document color profiles: RGB: sRGB IEC61966-2.1; CMYK: Japan Color 2001 Coated; Grayscale: Dot Gain 15%
            <Triangle dir="right" w={9} />
          </Profiles>
          <StatusInfo $width={212}>
            <Icon size={20}>{toolIcons.outline}</Icon>
            <StatusSwatch $color="#231815" />
            <span>C:0 M:0 Y:0 K:100&nbsp; 0,200 mm</span>
          </StatusInfo>
        </StatusRow>
      </StatusBar>
    </Window>
  </>
);

export default App;
